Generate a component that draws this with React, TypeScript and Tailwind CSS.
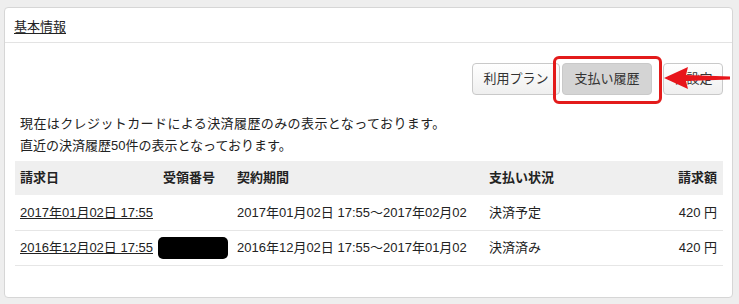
import React from 'react';

interface Payment {
  billedAt: string;
  receipt?: boolean;
  period: string;
  status: string;
  amount: string;
}

const payments: Payment[] = [
  {
    billedAt: '2017年01月02日 17:55',
    period: '2017年01月02日 17:55〜2017年02月02',
    status: '決済予定',
    amount: '420',
  },
  {
    billedAt: '2016年12月02日 17:55',
    receipt: true,
    period: '2016年12月02日 17:55〜2017年01月02',
    status: '決済済み',
    amount: '420',
  },
];

const font = { fontFamily: '"Liberation Sans", "Noto Sans CJK JP", sans-serif' };

const App: React.FC = () => {
  return (
    <div className="h-[304px] w-[739px] bg-[#eeeeee] pt-[7px] pl-[4px] pr-[6px] text-[13px] text-[#222]" style={font}>
      <div className="h-[291px] rounded-[4px] border border-[#d6d6d6] bg-white">
        <div className="flex h-[35px] items-end border-b border-[#e3e3e3] px-[9px] pb-[9px]">
          <a className="underline underline-offset-2 leading-none">基本情報</a>
        </div>

        <div className="pl-[10px] pr-[9px]">
          <div className="relative mt-[20px] flex items-center justify-end">
            <button className="h-[32px] w-[88px] rounded-[4px] border border-[#c9c9c9] bg-gradient-to-b from-white to-[#efefef] text-[#333]">
              利用プラン
            </button>
            <button className="ml-[2px] h-[32px] w-[90px] rounded-[4px] border border-[#c9c9c9] bg-[#d4d4d4] text-[#333]">
              支払い履歴
            </button>
            <button className="ml-[11px] h-[32px] w-[60px] rounded-[4px] border border-[#c9c9c9] bg-gradient-to-b from-white to-[#efefef] text-[#333]">
              各設定
            </button>

            <div className="absolute right-[61px] top-[-7px] h-[48px] w-[109px] rounded-[6px] border-[3px] border-[#e31b1b]" />
            <svg className="absolute right-[-7px] top-[3px]" width="66" height="24" viewBox="0 0 66 24">
              <polygon points="0,12 24,1 22,9 66,10.5 66,13.5 22,15 24,23" fill="#e8151b" />
            </svg>
          </div>

          <p className="mt-[18px] pl-[5px] leading-[22px] tracking-[0.4px]">現在はクレジットカードによる決済履歴のみの表示となっております。</p>
          <p className="pl-[5px] leading-[22px]">直近の決済履歴50件の表示となっております。</p>

          <table className="mt-[4px] w-full table-fixed border-collapse">
            <colgroup>
              <col className="w-[143px]" />
              <col className="w-[74px]" />
              <col className="w-[252px]" />
              <col className="w-[150px]" />
              <col />
            </colgroup>
            <thead>
              <tr className="h-[34px] bg-[#efefef] font-bold">
                <th className="px-[5px] text-left">請求日</th>
                <th className="px-[5px] text-left">受領番号</th>
                <th className="px-[5px] text-left">契約期間</th>
                <th className="px-[5px] text-left">支払い状況</th>
                <th className="pl-[5px] pr-[6px] text-right">請求額</th>
              </tr>
            </thead>
            <tbody>
              {payments.map((p) => (
                <tr key={p.billedAt} className="h-[35px] border-b border-[#e6e6e6]">
                  <td className="whitespace-nowrap px-[5px]">
                    <a className="underline">{p.billedAt}</a>
                  </td>
                  <td className="px-0">
                    {p.receipt && <div className="h-[22px] w-[70px] rounded-[5px] bg-black" />}
                  </td>
                  <td className="whitespace-nowrap px-[5px]">{p.period}</td>
                  <td className="px-[5px]">{p.status}</td>
                  <td className="pl-[5px] pr-[6px] text-right">{p.amount} 円</td>
                </tr>
              ))}
            </tbody>
          </table>
        </div>
      </div>
    </div>
  );
};

export default App;
